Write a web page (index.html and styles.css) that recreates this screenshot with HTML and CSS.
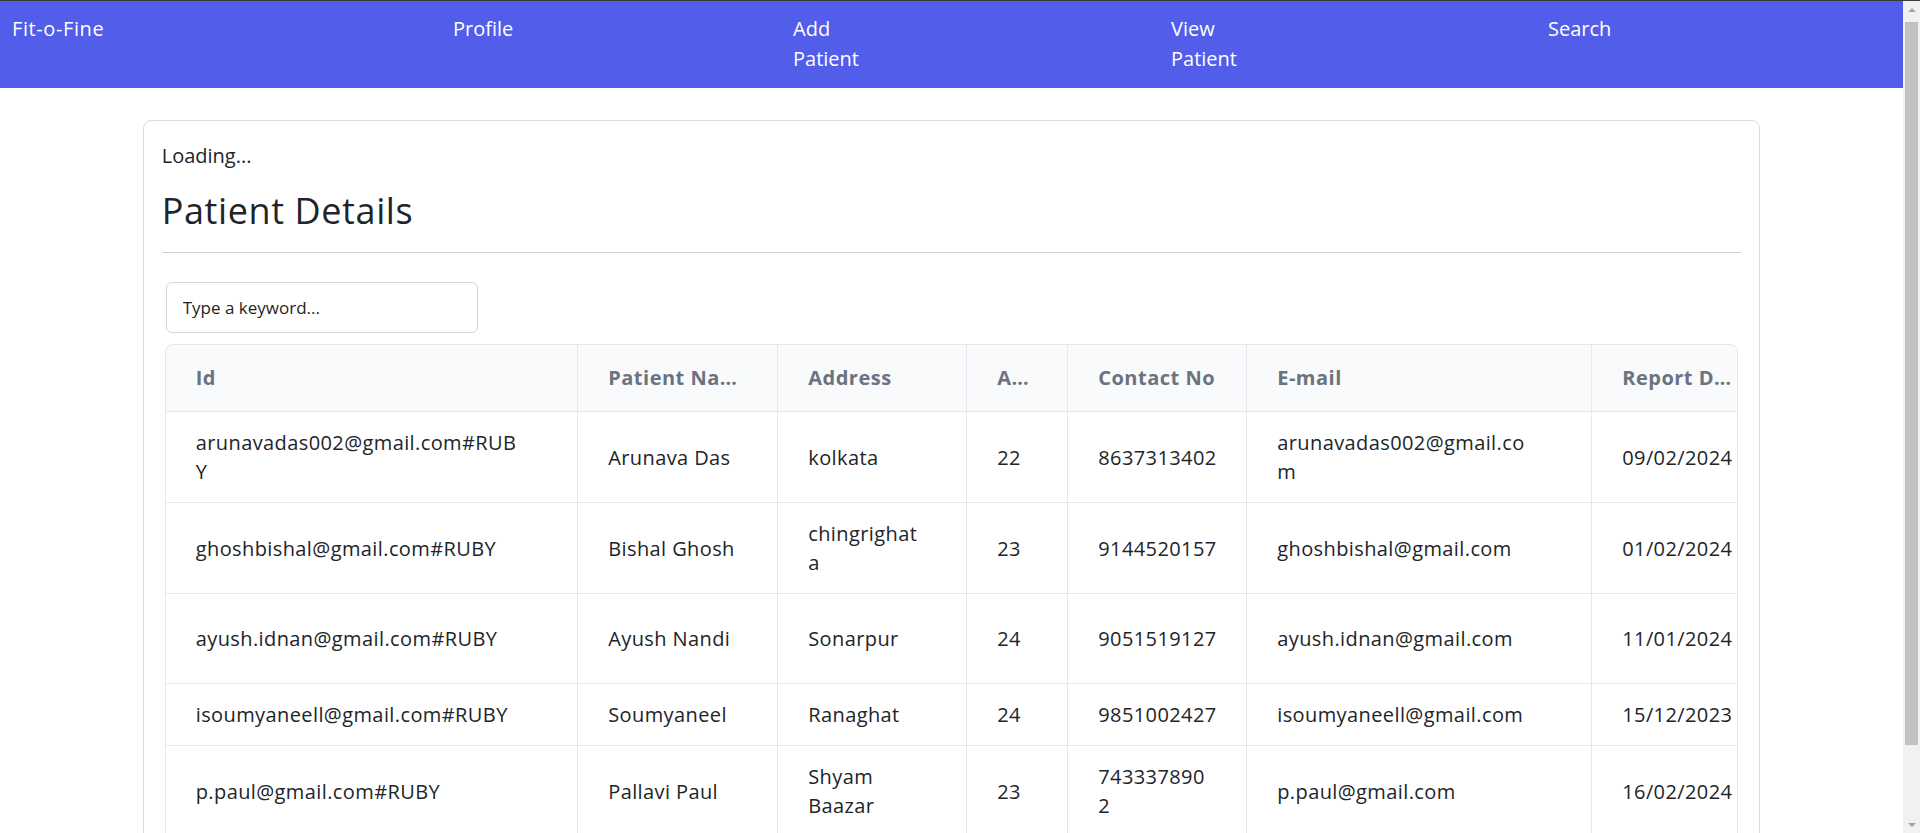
FILE: index.html
```html
<!DOCTYPE html>
<html lang="en">
<head>
<meta charset="utf-8">
<title>Fit-o-Fine — Patient Details</title>
<link rel="stylesheet" href="styles.css">
</head>
<body>
<nav class="topbar">
  <div class="brand">Fit-o-Fine</div>
  <a class="nav-link" href="#">Profile</a>
  <a class="nav-link" href="#">Add Patient</a>
  <a class="nav-link" href="#">View Patient</a>
  <a class="nav-link" href="#">Search</a>
</nav>

<main class="card">
  <p class="status">Loading...</p>
  <h2 class="title">Patient Details</h2>
  <hr class="divider">
  <input class="search" type="text" placeholder="Type a keyword...">

  <div class="table-wrap">
    <table class="grid">
      <colgroup>
        <col class="c-id">
        <col class="c-name">
        <col class="c-addr">
        <col class="c-age">
        <col class="c-contact">
        <col class="c-email">
        <col class="c-date">
      </colgroup>
      <thead>
        <tr>
          <th>Id</th>
          <th>Patient Name</th>
          <th>Address</th>
          <th class="th-narrow">Age</th>
          <th>Contact No</th>
          <th>E-mail</th>
          <th>Report Date</th>
        </tr>
      </thead>
      <tbody>
        <tr>
          <td>arunavadas002@gmail.com#RUB<br>Y</td>
          <td>Arunava Das</td>
          <td>kolkata</td>
          <td>22</td>
          <td>8637313402</td>
          <td>arunavadas002@gmail.co<br>m</td>
          <td>09/02/2024</td>
        </tr>
        <tr>
          <td>ghoshbishal@gmail.com#RUBY</td>
          <td>Bishal Ghosh</td>
          <td>chingrighat<br>a</td>
          <td>23</td>
          <td>9144520157</td>
          <td>ghoshbishal@gmail.com</td>
          <td>01/02/2024</td>
        </tr>
        <tr class="row-tall">
          <td>ayush.idnan@gmail.com#RUBY</td>
          <td>Ayush Nandi</td>
          <td>Sonarpur</td>
          <td>24</td>
          <td>9051519127</td>
          <td>ayush.idnan@gmail.com</td>
          <td>11/01/2024</td>
        </tr>
        <tr>
          <td>isoumyaneell@gmail.com#RUBY</td>
          <td>Soumyaneel</td>
          <td>Ranaghat</td>
          <td>24</td>
          <td>9851002427</td>
          <td>isoumyaneell@gmail.com</td>
          <td>15/12/2023</td>
        </tr>
        <tr>
          <td>p.paul@gmail.com#RUBY</td>
          <td>Pallavi Paul</td>
          <td>Shyam<br>Baazar</td>
          <td>23</td>
          <td>743337890<br>2</td>
          <td>p.paul@gmail.com</td>
          <td>16/02/2024</td>
        </tr>
      </tbody>
    </table>
  </div>
</main>

<div class="scrollbar" aria-hidden="true">
  <span class="sb-arrow sb-up"></span>
  <span class="sb-thumb"></span>
  <span class="sb-rest"></span>
  <span class="sb-arrow sb-down"></span>
</div>
</body>
</html>
```

FILE: styles.css
```css
* { box-sizing: border-box; }

html, body {
  margin: 0;
  padding: 0;
}

body {
  margin-right: 17px;
  font-family: "Open Sans", "Noto Sans", sans-serif;
  font-size: 20px;
  line-height: 29px;
  color: #212529;
  background: #ffffff;
}

/* ---------- top bar ---------- */
.topbar {
  display: grid;
  grid-template-columns: 441px 340px 378px 377px 1fr;
  align-items: start;
  height: 88px;
  padding: 13px 0 0 12px;
  background: #525de9;
  border-top: 1px solid #3a3a3a;
  color: #ffffff;
  font-size: 20px;
  line-height: 30px;
}

.brand {
  color: #ffffff;
  letter-spacing: 0.6px;
}

.nav-link {
  color: #ffffff;
  text-decoration: none;
  max-width: 90px;
}

/* ---------- card ---------- */
.card {
  width: 85%;
  margin: 32px auto 60px;
  padding: 20px 18px 20px;
  border: 1px solid #dcdcdc;
  border-radius: 8px;
}

.status {
  margin: 0;
  font-size: 20px;
  line-height: 29px;
}

.title {
  margin: 20px 0 0;
  font-size: 36px;
  line-height: 42px;
  font-weight: 500;
  letter-spacing: 0.6px;
  color: #212529;
}

.divider {
  margin: 20px 0 0;
  border: 0;
  border-top: 1px solid #cfcfcf;
  height: 0;
}

.search {
  display: block;
  width: 312px;
  height: 51px;
  margin: 29px 0 0 4px;
  padding: 0 16px;
  border: 1px solid #d5d5d8;
  border-radius: 6px;
  font-family: inherit;
  font-size: 17px;
  color: #212529;
  background: #fff;
  outline: none;
}

.search::placeholder {
  color: #1f1f1f;
  opacity: 1;
}

/* ---------- table ---------- */
.table-wrap {
  margin: 11px 3px 0;
  border: 1px solid #e5e7eb;
  border-bottom: 0;
  border-radius: 8px 8px 0 0;
  overflow: hidden;
}

.grid {
  table-layout: fixed;
  border-collapse: collapse;
  width: 1601px;
}

.c-id { width: 412px; }
.c-name { width: 200px; }
.c-addr { width: 189px; }
.c-age { width: 101px; }
.c-contact { width: 179px; }
.c-email { width: 345px; }
.c-date { width: 175px; }

.grid th,
.grid td {
  text-align: left;
  vertical-align: middle;
  border-right: 1px solid #e5e7eb;
  border-bottom: 1px solid #e5e7eb;
  white-space: nowrap;
  overflow: hidden;
}

.grid th {
  padding: 18px 30px 18px 30px;
  line-height: 30px;
  background: #f9fafb;
  color: #6b7280;
  font-weight: 700;
  font-size: 20px;
  letter-spacing: 0.5px;
  text-overflow: ellipsis;
}

.grid th.th-narrow {
  padding-right: 42px;
}

.grid td {
  padding: 16px 30px;
  line-height: 29px;
  letter-spacing: 0.4px;
  color: #212529;
}

.grid .row-tall td {
  height: 90px;
}

/* ---------- window scrollbar (browser chrome) ---------- */
.scrollbar {
  position: fixed;
  top: 0;
  right: 0;
  width: 17px;
  height: 100vh;
  display: flex;
  flex-direction: column;
  align-items: center;
  background: #f1f1f1;
  border-top: 1px solid #3a3a3a;
}

.sb-arrow {
  flex: 0 0 17px;
  width: 17px;
  display: flex;
  align-items: center;
  justify-content: center;
}

.sb-arrow::before {
  content: "";
  width: 0;
  height: 0;
  border-left: 4px solid transparent;
  border-right: 4px solid transparent;
}

.sb-up::before {
  border-bottom: 4px solid #a3a3a3;
}

.sb-down::before {
  border-top: 4px solid #a3a3a3;
}

.sb-thumb {
  flex: 0 0 723px;
  width: 13px;
  margin-top: 4px;
  background: #c1c1c1;
}

.sb-rest {
  flex: 1 1 auto;
}
```
